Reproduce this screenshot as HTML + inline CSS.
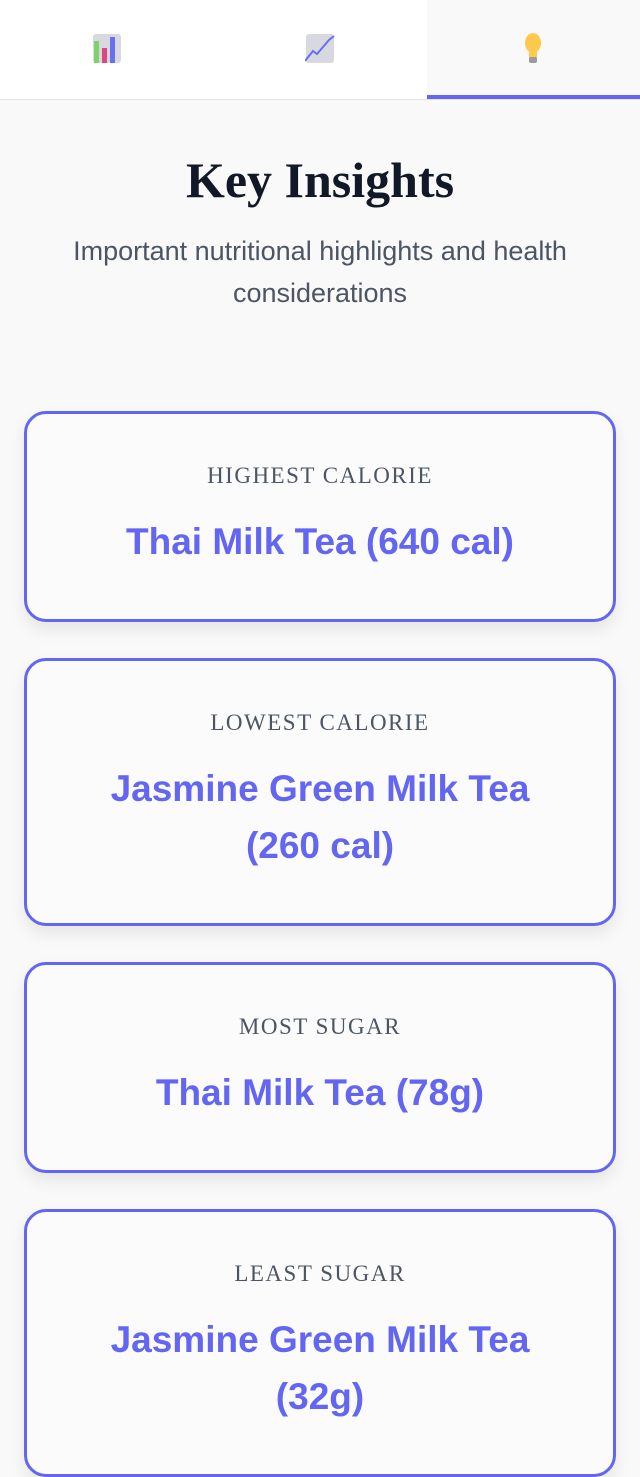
<!DOCTYPE html>
<html><head><meta charset="utf-8"><style>
*{margin:0;padding:0;box-sizing:border-box}
body{width:640px;height:1387px;overflow:hidden;background:#f9f9f9;font-family:"Liberation Sans",sans-serif}
.tabs{height:100px;background:#fff;border-bottom:1px solid #e2e2e2;display:flex;position:relative}
.tab{flex:1;display:flex;align-items:center;justify-content:center;padding-bottom:4px}
.tab.active{background:#f9f9f9;border-bottom:4px solid #6366f1;padding-bottom:0}
h1{font-family:"Liberation Serif",serif;font-weight:700;font-size:50px;text-align:center;color:#111827;margin-top:50px;line-height:60px}
.sub{font-size:27px;color:#4b5563;text-align:center;line-height:42px;margin:20px 40px 0}
.card{margin:0 24px 36px;border:3px solid #6366f1;border-radius:22px;background:#fbfbfb;box-shadow:0 8px 16px rgba(0,0,0,.08);text-align:center;padding:47px 20px 49px}
.lab{font-family:"Liberation Serif",serif;font-size:23px;letter-spacing:1.5px;color:#4b5563;line-height:30px}
.val{font-size:37px;font-weight:700;color:#6366f1;line-height:57px;margin-top:22px}
</style></head><body>
<div class="tabs">
<div class="tab"><svg width="30" height="30" viewBox="0 0 30 30"><rect x="1" y="1" width="28" height="29" rx="3" fill="#d8d8e0"/><rect x="2" y="8" width="5" height="22" fill="#7ed26a"/><rect x="10" y="15" width="5" height="15" fill="#e0457b"/><rect x="18" y="4" width="5" height="26" fill="#6a6ef0"/></svg></div>
<div class="tab"><svg width="30" height="30" viewBox="0 0 30 30"><rect x="1" y="1" width="28" height="29" rx="3" fill="#d8d8e0"/><path d="M0 28 L8 18 L12 21 L24 7 L29 3" stroke="#6a6ef0" stroke-width="2" fill="none"/></svg></div>
<div class="tab active"><svg width="20" height="32" viewBox="0 0 20 32"><ellipse cx="10" cy="11" rx="8" ry="10" fill="#ffc94d"/><rect x="6" y="20" width="8" height="6" fill="#ffc94d"/><rect x="6" y="25" width="8" height="6" rx="2" fill="#9a9aa0"/></svg></div>
</div>
<h1>Key Insights</h1>
<p class="sub">Important nutritional highlights and health considerations</p>
<div style="height:97px"></div>
<div class="card"><div class="lab">HIGHEST CALORIE</div><div class="val">Thai Milk Tea (640 cal)</div></div>
<div class="card"><div class="lab">LOWEST CALORIE</div><div class="val">Jasmine Green Milk Tea<br>(260 cal)</div></div>
<div class="card"><div class="lab">MOST SUGAR</div><div class="val">Thai Milk Tea (78g)</div></div>
<div class="card"><div class="lab">LEAST SUGAR</div><div class="val">Jasmine Green Milk Tea<br>(32g)</div></div>
</body></html>
